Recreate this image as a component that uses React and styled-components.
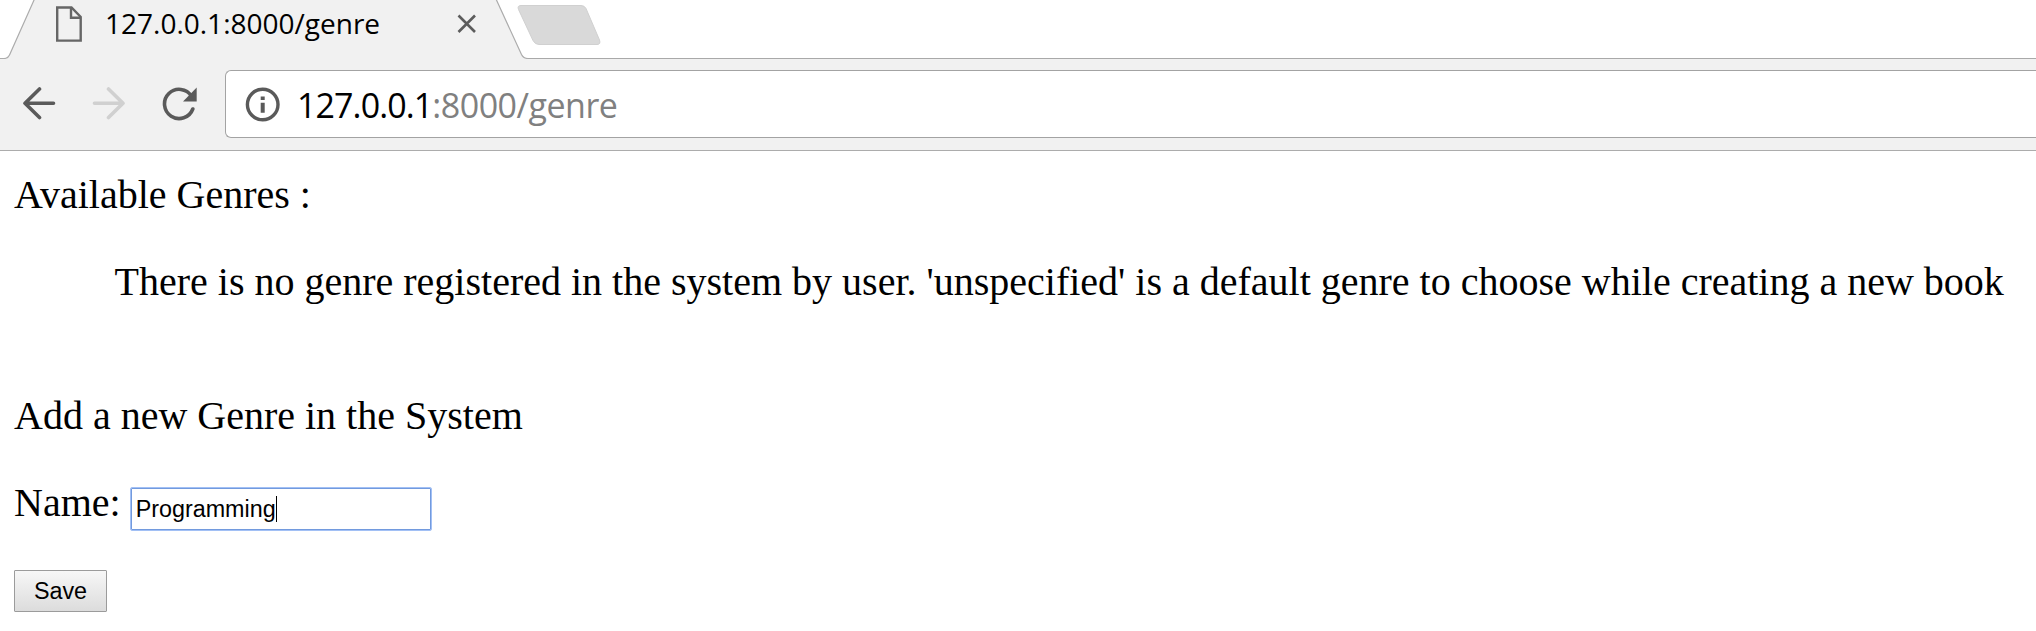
import React from 'react';
import styled, { createGlobalStyle } from 'styled-components';

const GlobalStyle = createGlobalStyle`
  * { box-sizing: border-box; }
  html, body { margin: 0; background: #fff; overflow: hidden; }
`;

const Window = styled.div`
  width: 100%;
  height: 631px;
  display: flex;
  flex-direction: column;
  overflow: hidden;
  background: #fff;
`;

const TabStrip = styled.div`
  display: flex;
  height: 59px;
  flex: none;
`;

const Tab = styled.div`
  position: relative;
  display: flex;
  width: 517px;
  height: 59px;
  padding-left: 56px;
`;

const TabShape = styled.svg`
  position: absolute;
  left: 0;
  top: 0;
`;

const TabIcon = styled.svg`
  position: relative;
  flex: none;
  margin-top: ${(p) => p.$top}px;
`;

const TabTitle = styled.span`
  position: relative;
  width: 375px;
  padding-left: 23px;
  font: 28px/38px 'Open Sans', sans-serif;
  color: #000;
  white-space: nowrap;
  margin-top: 4px;
`;

const StripRest = styled.div`
  flex: 1;
  border-bottom: 1px solid #a9a9a9;
  margin-left: 9px;
`;

const NewTab = styled.svg`
  position: relative;
  display: block;
  margin: 4px 0 0 -9px;
`;

const Toolbar = styled.div`
  display: flex;
  flex: none;
  height: 92px;
  padding: 11px 0 13px 22px;
  background: #f1f1f1;
  border-bottom: 1px solid #acacac;
`;

const NavIcons = styled.div`
  display: flex;
  width: 203px;
  gap: 36px;
  padding-top: 16px;
`;

const AddressBar = styled.div`
  display: flex;
  flex: 1;
  height: 68px;
  padding-left: 19px;
  background: #fff;
  border: 1px solid #a3a3a3;
  border-right: 0;
  border-radius: 6px 0 0 6px;
`;

const InfoIcon = styled.svg`
  flex: none;
  margin-top: 16px;
`;

const Url = styled.span`
  padding-left: 16px;
  font: 34px/46px 'Open Sans', sans-serif;
  letter-spacing: -0.9px;
  color: #000;
  white-space: nowrap;
  margin-top: 11px;
`;

const UrlPath = styled.span`
  color: #808080;
  letter-spacing: -0.5px;
`;

const Page = styled.main`
  flex: 1;
  padding: 21px 14px 0;
  font: 40px/46px 'Liberation Serif', serif;
  color: #000;
  white-space: nowrap;
`;

const Line = styled.div`
  height: 46px;
  margin-bottom: ${(p) => p.$gap}px;
  padding-left: ${(p) => p.$indent || 0}px;
`;

const FieldRow = styled.label`
  display: flex;
  height: 46px;
  gap: 9px;
  margin-bottom: 44px;
`;

const TextField = styled.span`
  display: flex;
  align-items: center;
  width: 302px;
  height: 44px;
  margin-top: 7px;
  padding-left: 5px;
  border: 1px solid #a2c0f5;
  border-radius: 2px;
  box-shadow: inset 0 0 0 1px #729ade;
  font: 23.33px/27px 'Liberation Sans', sans-serif;
`;

const Caret = styled.i`
  width: 1px;
  height: 26px;
  background: #000;
`;

const SaveButton = styled.button`
  display: block;
  width: 93px;
  height: 42px;
  padding: 0;
  border: 1px solid #9b9b9b;
  border-radius: 1px;
  background: linear-gradient(#f7f7f7, #dcdcdc);
  font: 23.33px/27px 'Liberation Sans', sans-serif;
  color: #000;
`;

const Arrow = ({ color, flip }) => (
  <svg width="34" height="34" viewBox="0 0 34 34" fill="none" stroke={color} strokeWidth="3.6" strokeLinecap="round" strokeLinejoin="round">
    <path transform={flip ? 'translate(34 0) scale(-1 1)' : undefined} d="M31.5 17.3H3M17.5 3 3 17.3 17.5 31.5" />
  </svg>
);

export default function App() {
  return (
    <Window>
      <GlobalStyle />
      <TabStrip>
        <Tab>
          <TabShape width="528" height="59" viewBox="0 0 528 59">
            <path d="M0 59V58.5H4Q8 58.5 9.5 55L34.5 -1H496L521.5 54.5Q523.5 58.5 528 58.5V59Z" fill="#f1f1f1" />
            <path d="M0 58.5H4Q8 58.5 9.5 55L34.5 -1M496 -1L521.5 54.5Q523.5 58.5 528 58.5" fill="none" stroke="#acacac" strokeWidth="1.2" />
          </TabShape>
          <TabIcon $top={6} width="26" height="36" viewBox="0 0 26 36" fill="none" stroke="#666" strokeWidth="2.4">
            <path d="M1.2 1.5H15.5L24.7 11V34.6H1.2Z" />
            <path d="M15 2V11.7H24.5" />
          </TabIcon>
          <TabTitle>127.0.0.1:8000/genre</TabTitle>
          <TabIcon $top={14} width="20" height="20" viewBox="0 0 20 20" stroke="#5c5c5c" strokeWidth="2.6">
            <path d="M1.5 1.5 18 18M18 1.5 1.5 18" />
          </TabIcon>
        </Tab>
        <StripRest>
          <NewTab width="86" height="44" viewBox="0 0 86 44">
            <path d="M4 1.5H64Q67.5 1.5 69 4.5L82.5 36Q84 40.5 80 40.5H22Q18 40.5 16 36.5L1.5 5.5Q0 1.5 4 1.5Z" fill="#d9d9d9" stroke="#d0d0d0" />
          </NewTab>
        </StripRest>
      </TabStrip>
      <Toolbar>
        <NavIcons>
          <Arrow color="#5a5a5a" />
          <Arrow color="#d0d0d0" flip />
          <svg width="36" height="36" viewBox="0 0 36 36" fill="none">
            <path d="M29.5 10.2A14.6 14.6 0 1 0 30.8 23" stroke="#5a5a5a" strokeWidth="3.6" strokeLinecap="round" />
            <path d="M34.7 1.5V15.5H21Z" fill="#5a5a5a" />
          </svg>
        </NavIcons>
        <AddressBar>
          <InfoIcon width="36" height="36" viewBox="0 0 36 36">
            <circle cx="17.7" cy="17.5" r="15.3" fill="none" stroke="#5a5a5a" strokeWidth="3.4" />
            <path d="M15.7 9.5h4v3.6h-4zM15.7 15.8h4v10h-4z" fill="#5a5a5a" />
          </InfoIcon>
          <Url>127.0.0.1<UrlPath>:8000/genre</UrlPath></Url>
        </AddressBar>
      </Toolbar>
      <Page>
        <Line $gap={41}>Available Genres :</Line>
        <Line $gap={88} $indent={100.5}>There is no genre registered in the system by user. 'unspecified' is a default genre to choose while creating a new book</Line>
        <Line $gap={41}>Add a new Genre in the System</Line>
        <FieldRow>
          Name:
          <TextField>Programming<Caret /></TextField>
        </FieldRow>
        <SaveButton>Save</SaveButton>
      </Page>
    </Window>
  );
}
